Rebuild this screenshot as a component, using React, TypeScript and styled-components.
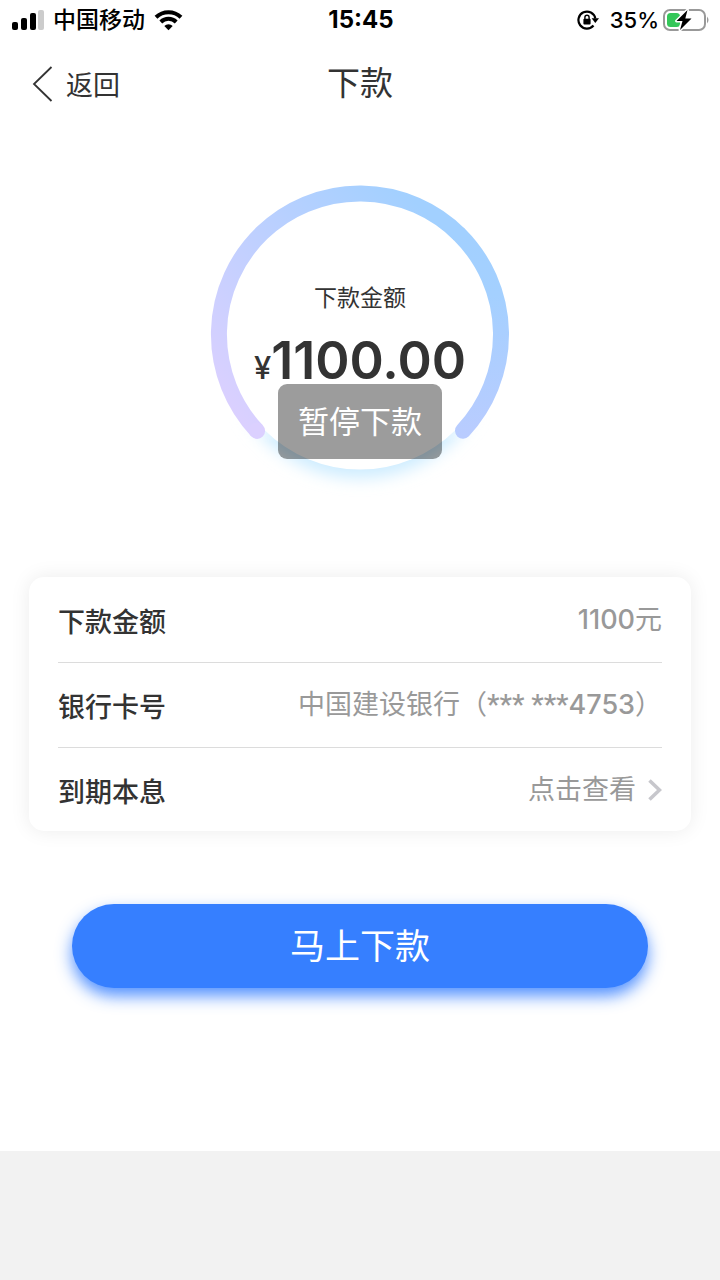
import React from "react";
import styled, { createGlobalStyle } from "styled-components";

const GlobalStyle = createGlobalStyle`
  * { box-sizing: border-box; }
  body {
    margin: 0;
    background: #f2f2f2;
    color: #333;
    font-family: Inter, "Noto Sans CJK SC", sans-serif;
  }
  button { font-family: inherit; border: 0; padding: 0; background: none; color: inherit; cursor: pointer; }
`;

const Screen = styled.div`
  background: #fff;
  padding-bottom: 163px;
`;

const StatusBar = styled.div`
  display: grid;
  grid-template-columns: 1fr auto 1fr;
  align-items: center;
  height: 40px;
  padding: 0 10px 0 12px;
  color: #000;
  font-size: 23px;
  line-height: 40px;
`;

const StatusGroup = styled.div<{ $end?: boolean }>`
  display: flex;
  align-items: center;
  justify-content: ${(p) => (p.$end ? "flex-end" : "flex-start")};
  gap: ${(p) => (p.$end ? "4px" : "9px")};
`;

const Carrier = styled.span`
  font-weight: 500;
`;

const Clock = styled.time`
  font-size: 24px;
  font-weight: 700;
`;

const BatteryLevel = styled.span`
  margin-left: 7px;
  font-size: 22px;
  font-weight: 500;
`;

const NavBar = styled.header`
  display: grid;
  grid-template-columns: 1fr auto 1fr;
  align-items: center;
  height: 88px;
  padding: 0 32px;
`;

const BackButton = styled.button`
  display: flex;
  align-items: center;
  justify-self: start;
  gap: 13px;
  font-size: 27px;
  line-height: 40px;
`;

const BackText = styled.span`
  padding-top: 4px;
`;

const Title = styled.h1`
  margin: 0;
  font-size: 33px;
  font-weight: 400;
  line-height: 44px;
  padding-bottom: 2px;
`;

const Gauge = styled.section`
  position: relative;
  display: grid;
  justify-items: center;
  width: 320px;
  margin: 42px auto 0;
`;

const Ring = styled.svg`
  grid-area: 1 / 1;
  display: block;
`;

const GaugeText = styled.div`
  grid-area: 1 / 1;
  display: flex;
  flex-direction: column;
  align-items: center;
  padding-top: 112px;
`;

const GaugeLabel = styled.div`
  font-size: 23px;
  line-height: 32px;
`;

const Amount = styled.div`
  display: flex;
  align-items: baseline;
  margin-top: 16px;
  font-size: 52px;
  font-weight: 600;
  line-height: 62px;
`;

const Currency = styled.span`
  font-size: 31px;
  font-weight: 500;
`;

const Toast = styled.div`
  position: absolute;
  top: 214px;
  left: 50%;
  transform: translateX(-50%);
  padding: 0 20px;
  border-radius: 9px;
  background: rgba(0, 0, 0, 0.39);
  color: #fff;
  font-size: 31px;
  line-height: 75px;
  white-space: nowrap;
`;

const Card = styled.dl`
  margin: 67px 29px 0;
  padding: 1px 29px 0;
  border-radius: 15px;
  background: #fff;
  box-shadow: 0 0 20px rgba(0, 0, 0, 0.08);
`;

const Row = styled.div`
  display: flex;
  align-items: center;
  justify-content: space-between;
  height: 85px;
  padding-top: 6px;
  border-bottom: 1px solid #dcdcdc;
  font-size: 27px;
  line-height: 40px;

  &:last-child {
    height: 83px;
    border-bottom: 0;
  }
`;

const Label = styled.dt`
  font-weight: 500;
`;

const Value = styled.dd`
  margin: 0;
  padding-bottom: 6px;
  color: #999;
  font-weight: 400;
`;

const Digits = styled.span`
  font-weight: 500;
`;

const Mask = styled.span`
  font-family: Roboto, sans-serif;
  font-size: 28px;
  font-weight: 500;
`;

const DetailButton = styled.button`
  display: flex;
  align-items: center;
  gap: 12px;
  font-size: 27px;
  line-height: 40px;
`;

const SubmitButton = styled.button`
  display: block;
  width: 80%;
  margin: 73px auto 0;
  border-radius: 42px;
  background: #367fff;
  box-shadow: 0 8px 16px rgba(54, 127, 255, 0.85);
  color: #fff;
  font-size: 35px;
  line-height: 84px;
`;

const SignalIcon = () => (
  <svg width="32" height="20" viewBox="0 0 32 20" aria-hidden="true">
    <rect x="0" y="12" width="6" height="8" rx="2" />
    <rect x="9" y="8" width="6" height="12" rx="2" />
    <rect x="18" y="3" width="6" height="17" rx="2" />
    <rect x="26" y="0" width="6" height="20" rx="2" fill="#ccc" />
  </svg>
);

const WifiIcon = () => (
  <svg width="29" height="22" viewBox="0 0 29 22" aria-hidden="true">
    <g fill="none" stroke="#000" strokeWidth="4">
      <path d="M2 8.2 A18 18 0 0 1 27 8.2" />
      <path d="M6.8 13 A11 11 0 0 1 22.2 13" />
    </g>
    <path d="M10.3 16.9 A6 6 0 0 1 18.7 16.9 L14.5 21.2 Z" />
  </svg>
);

const RotationLockIcon = () => (
  <svg width="22" height="20" viewBox="0 0 22 20" aria-hidden="true">
    <path d="M16.5 15.5 A8.5 8.5 0 1 1 18.3 8.5" fill="none" stroke="#000" strokeWidth="2.2" />
    <path d="M14.6 8.2 H22 L18.3 13 Z" />
    <rect x="6.4" y="8.8" width="7.2" height="5.6" rx="1" />
    <path d="M7.9 9 V7.4 A2.1 2.1 0 0 1 12.1 7.4 V9" fill="none" stroke="#000" strokeWidth="1.4" />
  </svg>
);

const BatteryIcon = () => (
  <svg width="47" height="24" viewBox="0 0 47 24" aria-hidden="true">
    <rect x="1" y="2" width="41" height="20" rx="6" fill="#fff" stroke="#999" strokeWidth="2" />
    <path d="M44 8.5 Q47 12 44 15.5 Z" fill="#999" />
    <rect x="4" y="5" width="13" height="14" rx="3.5" fill="#34c759" />
    <path
      d="M24.5 2 L13.5 13 H19.5 L17 22 L28.5 10.5 H22.3 Z"
      stroke="#fff"
      strokeWidth="3"
      paintOrder="stroke"
      strokeLinejoin="round"
    />
  </svg>
);

const BackIcon = () => (
  <svg width="21" height="36" viewBox="0 0 21 36" aria-hidden="true">
    <path d="M19.5 1 L2 18 L19.5 35" fill="none" stroke="#333" strokeWidth="1.8" />
  </svg>
);

const ChevronIcon = () => (
  <svg width="14" height="22" viewBox="0 0 14 22" aria-hidden="true">
    <path d="M1.5 1.5 L11.5 11 L1.5 20.5" fill="none" stroke="#c7c7cc" strokeWidth="3.6" />
  </svg>
);

const ProgressRing = () => (
  <Ring width="320" height="340" viewBox="0 0 320 340" aria-hidden="true">
    <defs>
      <linearGradient id="ringLeft" gradientUnits="userSpaceOnUse" x1="40" y1="262" x2="250" y2="70">
        <stop offset="0" stopColor="#dcd0ff" />
        <stop offset="1" stopColor="#a2d0ff" />
      </linearGradient>
      <linearGradient id="ringRight" gradientUnits="userSpaceOnUse" x1="270" y1="65" x2="270" y2="265">
        <stop offset="0" stopColor="#a2d0ff" />
        <stop offset="0.3" stopColor="#a4d0ff" />
        <stop offset="1" stopColor="#b9ccff" />
      </linearGradient>
      <linearGradient id="glowFade" x1="0" y1="0" x2="0" y2="1">
        <stop offset="0.72" stopColor="#fff" stopOpacity="0" />
        <stop offset="0.8" stopColor="#fff" />
      </linearGradient>
      <mask id="glowMask">
        <rect width="320" height="340" fill="url(#glowFade)" />
      </mask>
      <filter id="glow" x="-20%" y="-20%" width="140%" height="140%">
        <feGaussianBlur stdDeviation="8" />
      </filter>
    </defs>
    <g mask="url(#glowMask)">
      <circle cx="160" cy="173" r="135" fill="#cdecff" filter="url(#glow)" />
    </g>
    <circle cx="160" cy="164.5" r="135" fill="#fff" />
    <g fill="none" strokeWidth="16">
      <path d="M259.7 64.8 A141 141 0 0 1 263 260.8" stroke="url(#ringRight)" strokeLinecap="round" />
      <path d="M57 260.8 A141 141 0 0 1 259.7 64.8" stroke="url(#ringLeft)" />
      <path d="M57 260.8 L57.1 260.9" stroke="#dbd0ff" strokeLinecap="round" />
    </g>
  </Ring>
);

export default function App() {
  return (
    <>
      <GlobalStyle />
      <Screen>
        <StatusBar>
          <StatusGroup>
            <SignalIcon />
            <Carrier>中国移动</Carrier>
            <WifiIcon />
          </StatusGroup>
          <Clock>15:45</Clock>
          <StatusGroup $end>
            <RotationLockIcon />
            <BatteryLevel>35%</BatteryLevel>
            <BatteryIcon />
          </StatusGroup>
        </StatusBar>
        <NavBar>
          <BackButton type="button">
            <BackIcon />
            <BackText>返回</BackText>
          </BackButton>
          <Title>下款</Title>
        </NavBar>
        <main>
          <Gauge>
            <ProgressRing />
            <GaugeText>
              <GaugeLabel>下款金额</GaugeLabel>
              <Amount>
                <Currency>¥</Currency>1100.00
              </Amount>
            </GaugeText>
            <Toast role="status">暂停下款</Toast>
          </Gauge>
          <Card>
            <Row>
              <Label>下款金额</Label>
              <Value>
                <Digits>1100</Digits>元
              </Value>
            </Row>
            <Row>
              <Label>银行卡号</Label>
              <Value>
                中国建设银行（<Mask>*** ***</Mask>
                <Digits>4753</Digits>）
              </Value>
            </Row>
            <Row>
              <Label>到期本息</Label>
              <Value>
                <DetailButton type="button">
                  点击查看
                  <ChevronIcon />
                </DetailButton>
              </Value>
            </Row>
          </Card>
          <SubmitButton type="button">马上下款</SubmitButton>
        </main>
      </Screen>
    </>
  );
}
